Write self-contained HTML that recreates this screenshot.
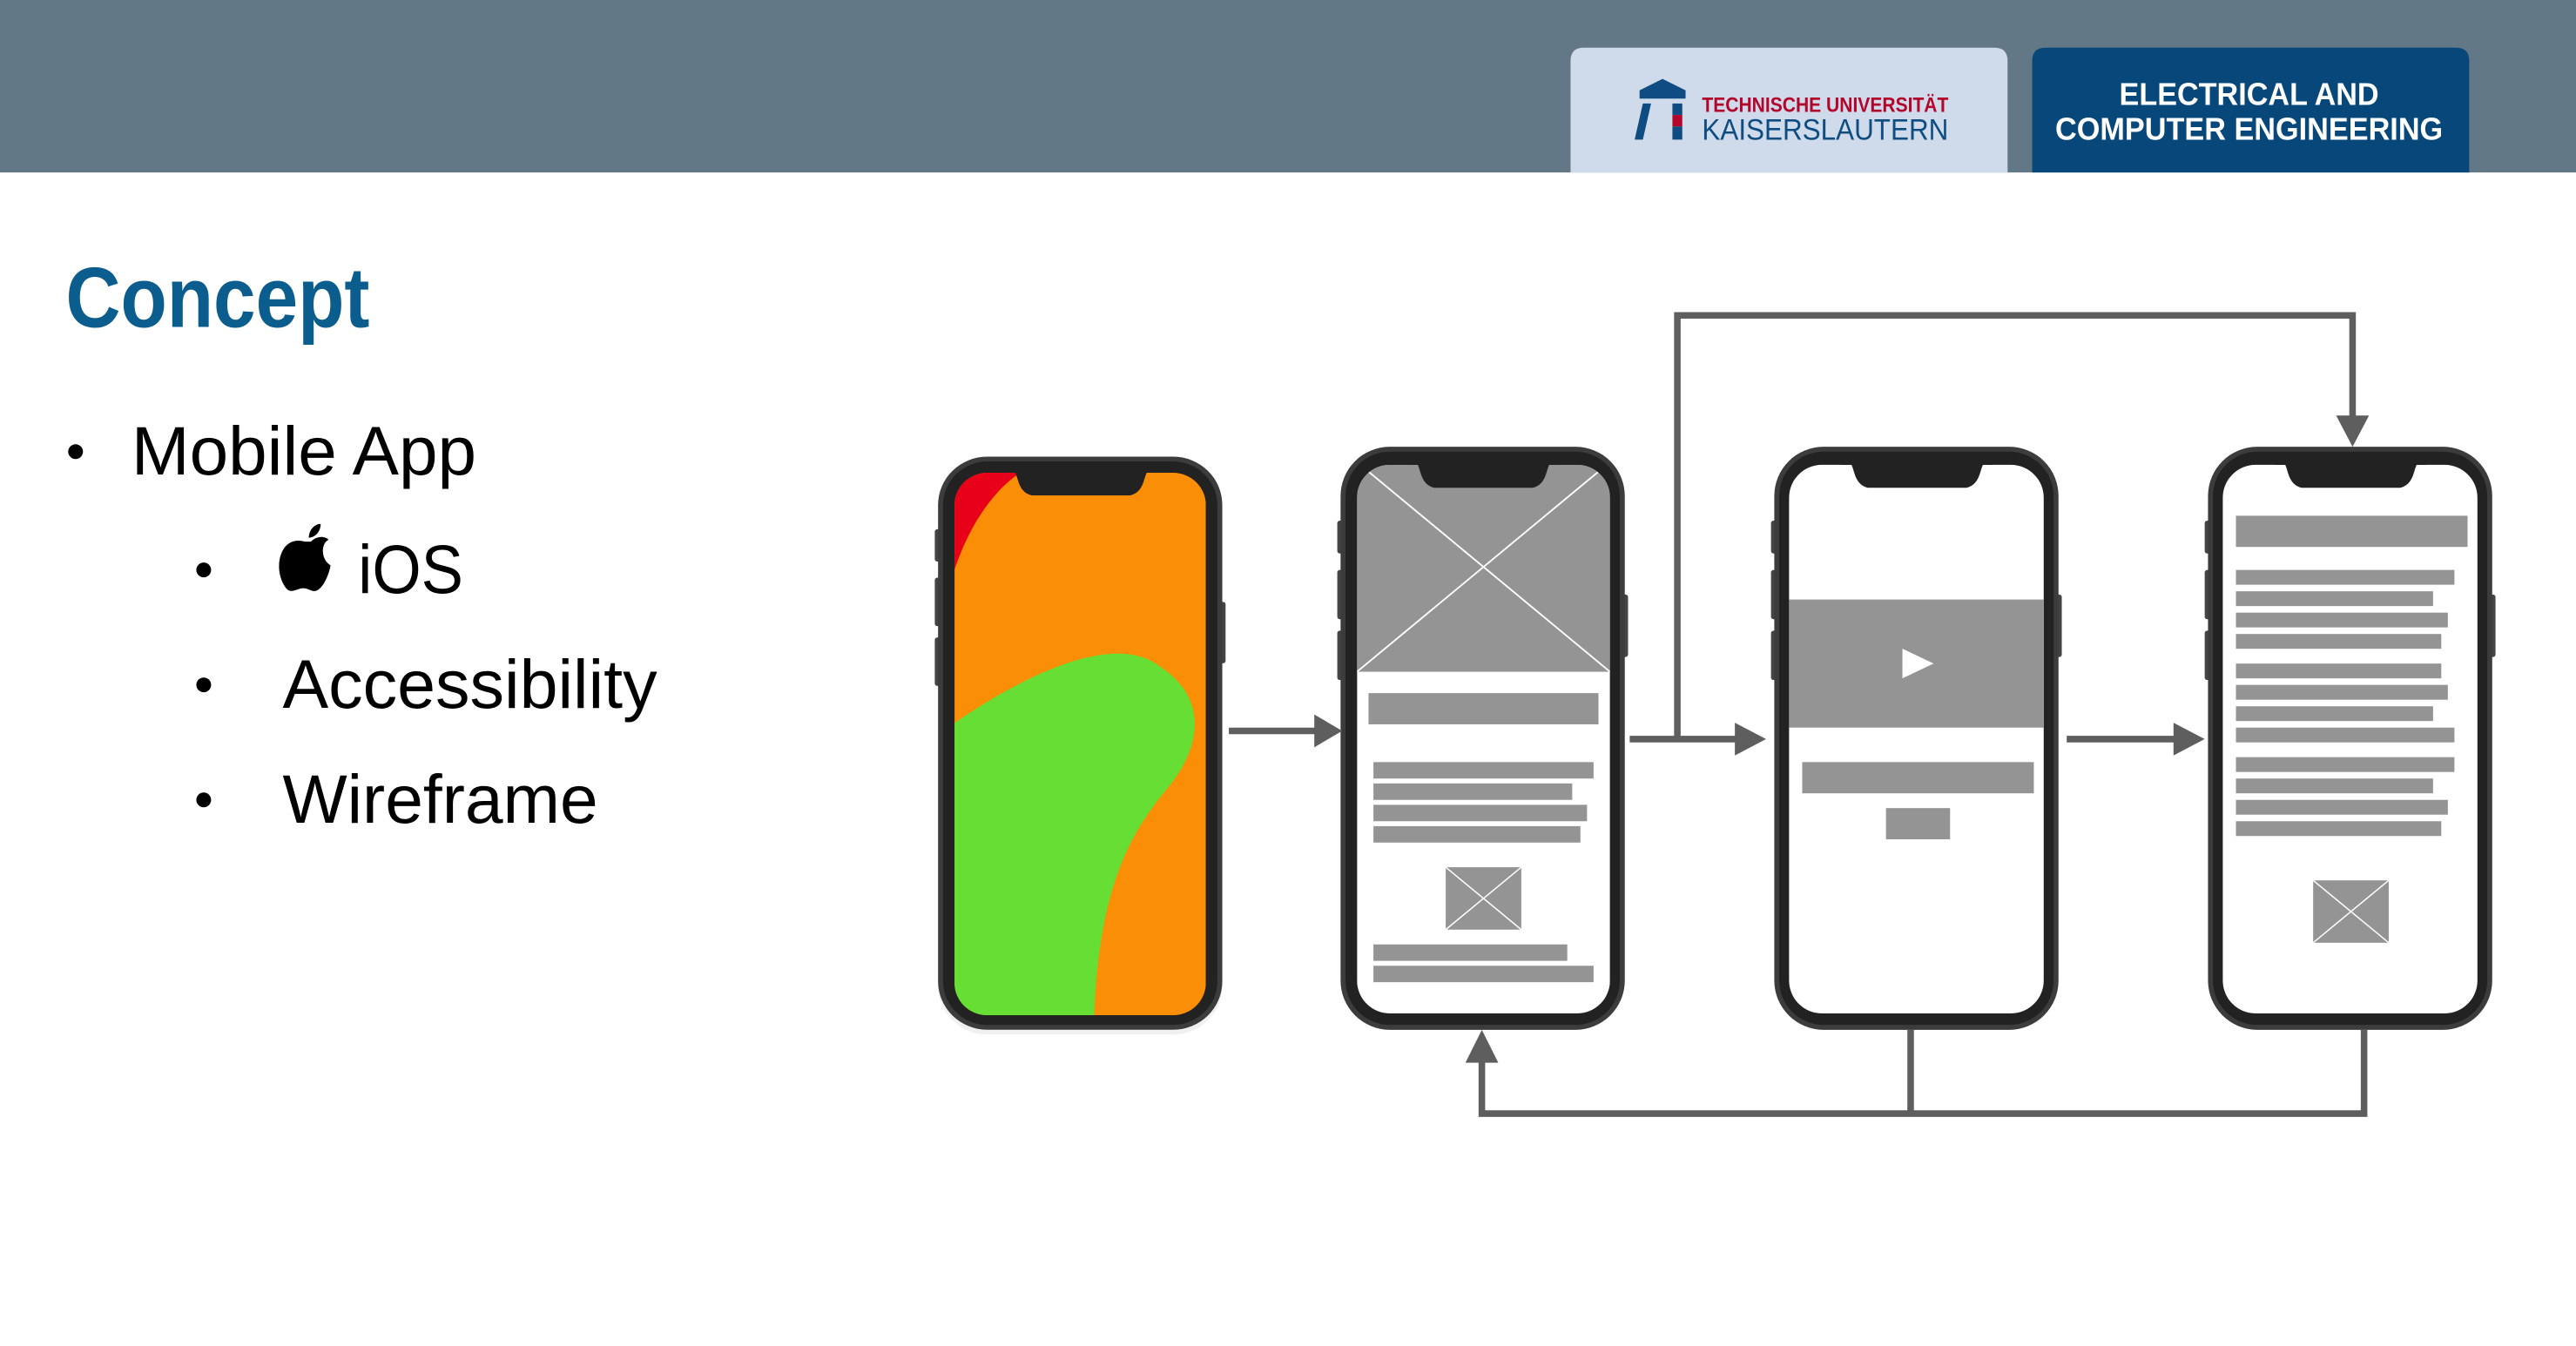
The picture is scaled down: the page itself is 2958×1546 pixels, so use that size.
<!DOCTYPE html>
<html><head><meta charset="utf-8"><style>
html,body{margin:0;padding:0;background:#fff}
svg{display:block}
</style></head><body>
<svg width="2958" height="1546" viewBox="0 0 1568 819.5" xmlns="http://www.w3.org/2000/svg">
<defs>
<g id="frame">
  <rect x="-2" y="45" width="4" height="20" rx="1.5" fill="#444"/>
  <rect x="-2" y="75" width="4" height="30" rx="1.5" fill="#444"/>
  <rect x="-2" y="112" width="4" height="30" rx="1.5" fill="#444"/>
  <rect x="171" y="90" width="4" height="38" rx="1.5" fill="#444"/>
  <rect x="0" y="0" width="173" height="355" rx="30" fill="#3c3c3c"/>
  <rect x="3" y="3" width="167" height="349" rx="27" fill="#222"/>
</g>
<path id="notch" d="M41,0 L47,0 C49,4 49,12 57,14 L117,14 C125,12 125,4 127,0 L133,0 L133,-2 L41,-2 Z" fill="#222"/>
</defs>
<rect width="1568" height="819.5" fill="#fff"/>
<rect width="1568" height="105" fill="#637886"/>
<path d="M956,105 V37 Q956,29 964,29 H1214 Q1222,29 1222,37 V105 Z" fill="#cfdbeb"/>
<path d="M1237,105 V37 Q1237,29 1245,29 H1495 Q1503,29 1503,37 V105 Z" fill="#08477a"/>
<path d="M998,55 L1012,48 L1026,55 V60 H998 Z" fill="#0f4c81"/>
<path d="M1000,63 H1005 L1000,85 H995 Z" fill="#0f4c81"/>
<rect x="1018" y="63" width="6" height="7" fill="#0f4c81"/>
<rect x="1018" y="70" width="6" height="7" fill="#b3062a"/>
<rect x="1018" y="77" width="6" height="8" fill="#0f4c81"/>
<text x="1036" y="68" font-family="Liberation Sans, sans-serif" font-weight="bold" font-size="12.5" fill="#b3062a" textLength="150" lengthAdjust="spacingAndGlyphs">TECHNISCHE UNIVERSITÄT</text>
<text x="1036" y="85" font-family="Liberation Sans, sans-serif" font-size="18" fill="#0f4c81" textLength="150" lengthAdjust="spacingAndGlyphs">KAISERSLAUTERN</text>
<text x="1369" y="64" text-anchor="middle" font-family="Liberation Sans, sans-serif" font-weight="bold" font-size="19" fill="#fff" textLength="158" lengthAdjust="spacingAndGlyphs">ELECTRICAL AND</text>
<text x="1369" y="85" text-anchor="middle" font-family="Liberation Sans, sans-serif" font-weight="bold" font-size="19" fill="#fff" textLength="236" lengthAdjust="spacingAndGlyphs">COMPUTER ENGINEERING</text>

<text x="40" y="199" font-family="Liberation Sans, sans-serif" font-weight="bold" font-size="52" fill="#0b5d8e" textLength="185" lengthAdjust="spacingAndGlyphs">Concept</text>
<g font-family="Liberation Sans, sans-serif" font-size="42" fill="#000">
<circle cx="46" cy="275" r="4.5"/>
<text x="80" y="289" textLength="210" lengthAdjust="spacingAndGlyphs">Mobile App</text>
<circle cx="124" cy="347" r="4.5"/>
<g transform="translate(188,343) scale(1.2) translate(-188,-343)">
<path d="M189,332 C192,329 196,329 198,331 C194,333 194,341 199,344 C198,350 194,358 190,357 C187,356 186,355 183,356 C180,357 178,358 176,355 C172,349 172,341 175,336 C178,331 183,331 186,332 Z M188,330 C188,326 191,323 194,323 C194,327 191,330 188,330 Z" fill="#000"/>
</g>
<text x="218" y="361" textLength="64" lengthAdjust="spacingAndGlyphs">iOS</text>
<circle cx="124" cy="417" r="4.5"/>
<text x="172" y="431" textLength="228" lengthAdjust="spacingAndGlyphs">Accessibility</text>
<circle cx="124" cy="487" r="4.5"/>
<text x="172" y="501" textLength="192" lengthAdjust="spacingAndGlyphs">Wireframe</text>
</g>

<g transform="translate(571,278) scale(1,0.983)">
  <rect x="0" y="3" width="173" height="355" rx="30" fill="#000" opacity="0.06"/>
  <use href="#frame"/>
  <clipPath id="s1"><rect x="10" y="10" width="153" height="336" rx="20"/></clipPath>
  <g clip-path="url(#s1)">
    <rect x="10" y="10" width="153" height="336" fill="#fa8f07"/>
    <path d="M10,10 H50 C35,20 20,40 10,70 Z" fill="#e8001a"/>
    <path d="M10,165 C60,130 110,110 135,130 C165,150 160,180 140,205 C115,235 98,270 95,346 H10 Z" fill="#66de34"/>
  </g>
  <use href="#notch" transform="translate(0,10)"/>
</g>

<g transform="translate(816,272)">
  <use href="#frame"/>
  <clipPath id="s2"><rect x="10" y="11" width="154" height="334" rx="20"/></clipPath>
  <g clip-path="url(#s2)">
    <rect x="10" y="11" width="154" height="334" fill="#fff"/>
    <rect x="10" y="11" width="154" height="126" fill="#949494"/>
    <path d="M12,11 L164,137 M162,11 L10,137" stroke="#fff" stroke-width="1"/>
  </g>
  <use href="#notch" transform="translate(0,11)"/>
  <g fill="#949494">
    <rect x="17" y="150" width="140" height="19"/>
    <rect x="20" y="192" width="134" height="10"/>
    <rect x="20" y="205" width="121" height="10"/>
    <rect x="20" y="218" width="130" height="10"/>
    <rect x="20" y="231" width="126" height="10"/>
    <rect x="64" y="256" width="46" height="38"/>
    <rect x="20" y="303" width="118" height="10"/>
    <rect x="20" y="316" width="134" height="10"/>
  </g>
  <path d="M64,256 L110,294 M110,256 L64,294" stroke="#fff" stroke-width="0.8"/>
</g>

<g transform="translate(1080,272)">
  <use href="#frame"/>
  <rect x="9" y="11" width="155" height="334" rx="20" fill="#fff"/>
  <use href="#notch" transform="translate(0,11)"/>
  <g fill="#949494">
    <rect x="9" y="93" width="155" height="78"/>
    <rect x="17" y="192" width="141" height="19"/>
    <rect x="68" y="220" width="39" height="19"/>
  </g>
  <path d="M78,123 L97,132 L78,141 Z" fill="#fff"/>
</g>

<g transform="translate(1344,272)">
  <use href="#frame"/>
  <rect x="9" y="11" width="155" height="334" rx="20" fill="#fff"/>
  <use href="#notch" transform="translate(0,11)"/>
  <g fill="#949494">
    <rect x="17" y="42" width="141" height="19"/>
    <rect x="17" y="75" width="133" height="9"/>
    <rect x="17" y="88" width="120" height="9"/>
    <rect x="17" y="101" width="129" height="9"/>
    <rect x="17" y="114" width="125" height="9"/>
    <rect x="17" y="132" width="125" height="9"/>
    <rect x="17" y="145" width="129" height="9"/>
    <rect x="17" y="158" width="120" height="9"/>
    <rect x="17" y="171" width="133" height="9"/>
    <rect x="17" y="189" width="133" height="9"/>
    <rect x="17" y="202" width="120" height="9"/>
    <rect x="17" y="215" width="129" height="9"/>
    <rect x="17" y="228" width="125" height="9"/>
    <rect x="64" y="264" width="46" height="38"/>
  </g>
  <path d="M64,264 L110,302 M110,264 L64,302" stroke="#fff" stroke-width="0.8"/>
</g>

<g stroke="#5e5e5e" stroke-width="4" fill="none">
  <path d="M748,445 H802"/>
  <path d="M992,450 H1058"/>
  <path d="M1021,450 V192 H1432 V256"/>
  <path d="M1258,450 H1325"/>
  <path d="M1163,627 V678 M1439,627 V678 M1441,678 H902 V645"/>
</g>
<g fill="#5e5e5e">
  <path d="M800,435 L817,445 L800,455 Z"/>
  <path d="M1056,440 L1075,450 L1056,460 Z"/>
  <path d="M1323,440 L1342,450 L1323,460 Z"/>
  <path d="M1422,253 L1432,272 L1442,253 Z"/>
  <path d="M892,647 L902,627 L912,647 Z"/>
</g>
</svg>
</body></html>
